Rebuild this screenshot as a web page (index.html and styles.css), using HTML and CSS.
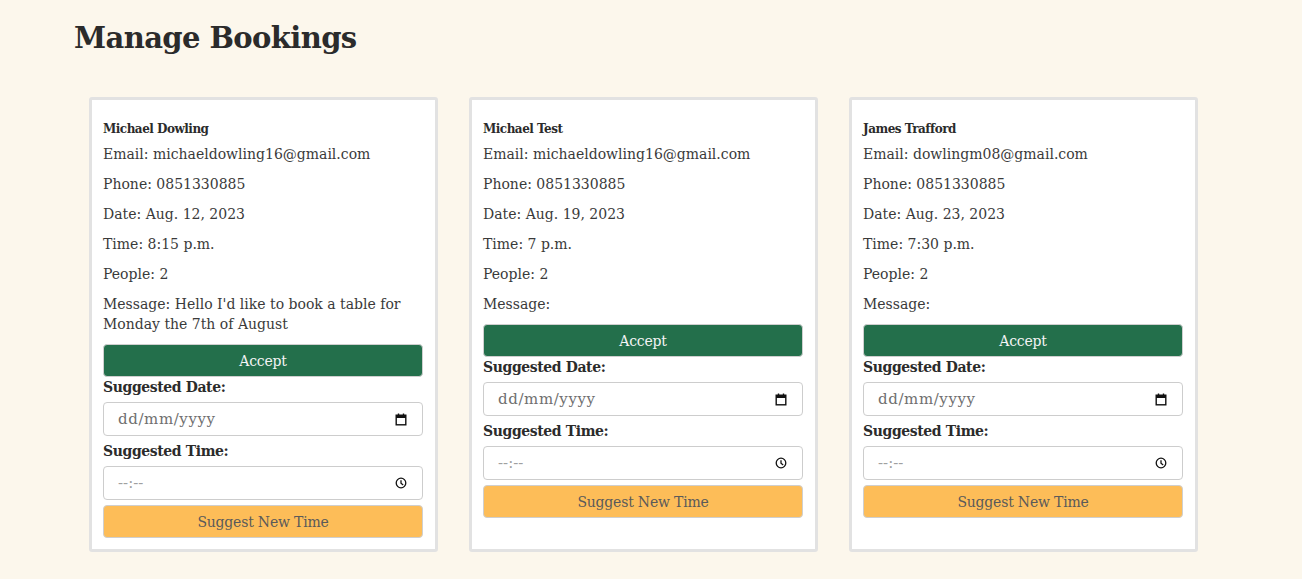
FILE: index.html
```html
<!DOCTYPE html>
<html lang="en">
<head>
<meta charset="utf-8">
<title>Manage Bookings</title>
<link rel="stylesheet" href="styles.css">
</head>
<body>
<main class="page">
  <h1 class="title">Manage Bookings</h1>
  <div class="cards">
    <div class="card">
      <h5 class="name">Michael Dowling</h5>
      <p class="line">Email: michaeldowling16@gmail.com</p>
      <p class="line">Phone: 0851330885</p>
      <p class="line">Date: Aug. 12, 2023</p>
      <p class="line">Time: 8:15 p.m.</p>
      <p class="line">People: 2</p>
      <p class="line">Message: Hello I'd like to book a table for Monday the 7th of August</p>
      <button class="btn btn-accept">Accept</button>
      <label class="lbl">Suggested Date:</label>
      <div class="field">
        <input class="field-input" type="text" placeholder="dd/mm/yyyy">
        <svg class="ico" width="12" height="13" viewBox="0 0 12 13"><path d="M3.5 0.5v2.5M8.5 0.5v2.5" stroke="#111" stroke-width="1.4" fill="none"/><rect x="1.2" y="2.2" width="9.6" height="9.6" fill="none" stroke="#111" stroke-width="1.4"/><rect x="1" y="2" width="10" height="3" fill="#111"/></svg>
      </div>
      <label class="lbl">Suggested Time:</label>
      <div class="field">
        <input class="field-input time" type="text" placeholder="--:--">
        <svg class="ico" width="12" height="12" viewBox="0 0 12 12"><circle cx="6" cy="6" r="4.8" fill="none" stroke="#111" stroke-width="1.3"/><path d="M6 3.2V6.2L8.2 8" fill="none" stroke="#111" stroke-width="1.3"/></svg>
      </div>
      <button class="btn btn-suggest">Suggest New Time</button>
    </div>
    <div class="card">
      <h5 class="name">Michael Test</h5>
      <p class="line">Email: michaeldowling16@gmail.com</p>
      <p class="line">Phone: 0851330885</p>
      <p class="line">Date: Aug. 19, 2023</p>
      <p class="line">Time: 7 p.m.</p>
      <p class="line">People: 2</p>
      <p class="line">Message: </p>
      <button class="btn btn-accept">Accept</button>
      <label class="lbl">Suggested Date:</label>
      <div class="field">
        <input class="field-input" type="text" placeholder="dd/mm/yyyy">
        <svg class="ico" width="12" height="13" viewBox="0 0 12 13"><path d="M3.5 0.5v2.5M8.5 0.5v2.5" stroke="#111" stroke-width="1.4" fill="none"/><rect x="1.2" y="2.2" width="9.6" height="9.6" fill="none" stroke="#111" stroke-width="1.4"/><rect x="1" y="2" width="10" height="3" fill="#111"/></svg>
      </div>
      <label class="lbl">Suggested Time:</label>
      <div class="field">
        <input class="field-input time" type="text" placeholder="--:--">
        <svg class="ico" width="12" height="12" viewBox="0 0 12 12"><circle cx="6" cy="6" r="4.8" fill="none" stroke="#111" stroke-width="1.3"/><path d="M6 3.2V6.2L8.2 8" fill="none" stroke="#111" stroke-width="1.3"/></svg>
      </div>
      <button class="btn btn-suggest">Suggest New Time</button>
    </div>
    <div class="card">
      <h5 class="name">James Trafford</h5>
      <p class="line">Email: dowlingm08@gmail.com</p>
      <p class="line">Phone: 0851330885</p>
      <p class="line">Date: Aug. 23, 2023</p>
      <p class="line">Time: 7:30 p.m.</p>
      <p class="line">People: 2</p>
      <p class="line">Message: </p>
      <button class="btn btn-accept">Accept</button>
      <label class="lbl">Suggested Date:</label>
      <div class="field">
        <input class="field-input" type="text" placeholder="dd/mm/yyyy">
        <svg class="ico" width="12" height="13" viewBox="0 0 12 13"><path d="M3.5 0.5v2.5M8.5 0.5v2.5" stroke="#111" stroke-width="1.4" fill="none"/><rect x="1.2" y="2.2" width="9.6" height="9.6" fill="none" stroke="#111" stroke-width="1.4"/><rect x="1" y="2" width="10" height="3" fill="#111"/></svg>
      </div>
      <label class="lbl">Suggested Time:</label>
      <div class="field">
        <input class="field-input time" type="text" placeholder="--:--">
        <svg class="ico" width="12" height="12" viewBox="0 0 12 12"><circle cx="6" cy="6" r="4.8" fill="none" stroke="#111" stroke-width="1.3"/><path d="M6 3.2V6.2L8.2 8" fill="none" stroke="#111" stroke-width="1.3"/></svg>
      </div>
      <button class="btn btn-suggest">Suggest New Time</button>
    </div>
  </div>
</main>
</body>
</html>
```
FILE: styles.css
```css
* { box-sizing: border-box; }
html, body {
  margin: 0;
  padding: 0;
  background: #fcf7ec;
  color: #333;
  font-family: "DejaVu Serif", "Liberation Serif", serif;
}
.page {
  padding: 18px 0 0 74px;
}
.title {
  margin: 0;
  font-size: 29px;
  line-height: 40px;
  font-weight: bold;
  color: #2b2b2b;
  letter-spacing: -0.6px;
}
.cards {
  display: flex;
  gap: 31px;
  margin: 39px 0 0 15px;
  align-items: stretch;
}
.card {
  flex: none;
  width: 349px;
  background: #fff;
  border: 3px solid #e2e2e2;
  border-radius: 3px;
  padding: 20px 12px 11px 11px;
  display: flex;
  flex-direction: column;
}
.name {
  margin: 0 0 6px;
  font-size: 12px;
  line-height: 18px;
  font-weight: bold;
  color: #2b2b2b;
  letter-spacing: -0.5px;
}
.line {
  margin: 0 0 10px;
  font-size: 14px;
  line-height: 20px;
  color: #3a3a3a;
  letter-spacing: 0;
}
.btn {
  display: block;
  width: 100%;
  height: 33px;
  border: 1px solid #cfcfcf;
  border-radius: 4px;
  font-family: "DejaVu Serif", "Liberation Serif", serif;
  font-size: 14px;
  letter-spacing: -0.2px;
  padding: 0;
  margin: 0;
}
.btn-accept {
  background: #236f4b;
  color: #f4f4f4;
}
.btn-suggest {
  background: #fdbd58;
  color: #5a5a5a;
}
.lbl {
  display: block;
  margin: 0 0 5px;
  font-size: 14px;
  line-height: 20px;
  font-weight: bold;
  color: #2b2b2b;
  letter-spacing: -0.4px;
}
.field {
  display: flex;
  align-items: center;
  height: 34px;
  border: 1px solid #cdcdcd;
  border-radius: 4px;
  background: #fff;
  padding: 0 15px 0 14px;
  margin-bottom: 5px;
}
.field-input {
  flex: 1;
  min-width: 0;
  border: 0;
  outline: none;
  background: transparent;
  padding: 0;
  font-family: "DejaVu Serif", "Liberation Serif", serif;
  font-size: 15px;
  color: #333;
}
.field-input::placeholder {
  color: #6f6f6f;
  letter-spacing: 0.6px;
}
.field-input.time::placeholder {
  color: #a0a0a0;
  letter-spacing: 0;
}
.ico {
  flex: none;
}
```
